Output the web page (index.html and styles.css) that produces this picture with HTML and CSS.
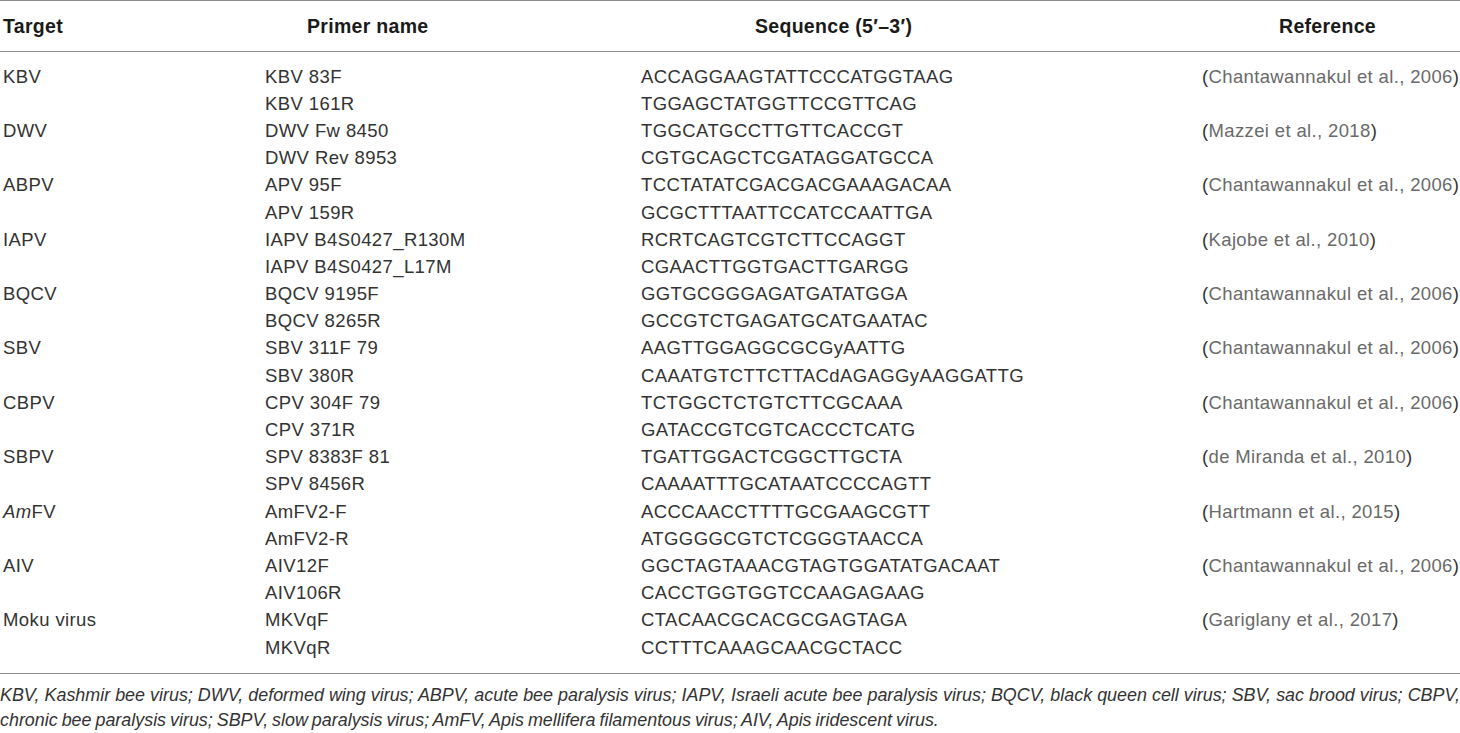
FILE: index.html
```html
<!DOCTYPE html>
<html lang="en">
<head>
<meta charset="utf-8">
<title>Primers</title>
<link rel="stylesheet" href="styles.css">
</head>
<body>
<div class="table">
  <div class="head">
    <div class="h h1">Target</div>
    <div class="h h2">Primer name</div>
    <div class="h h3">Sequence (5′–3′)</div>
    <div class="h h4">Reference</div>
  </div>
  <div class="body">
    <div class="row"><div class="c1">KBV</div><div>KBV 83F</div><div>ACCAGGAAGTATTCCCATGGTAAG</div><div class="ref">(<span>Chantawannakul et al., 2006</span>)</div></div>
    <div class="row"><div class="c1"></div><div>KBV 161R</div><div>TGGAGCTATGGTTCCGTTCAG</div><div></div></div>
    <div class="row"><div class="c1">DWV</div><div>DWV Fw 8450</div><div>TGGCATGCCTTGTTCACCGT</div><div class="ref">(<span>Mazzei et al., 2018</span>)</div></div>
    <div class="row"><div class="c1"></div><div>DWV Rev 8953</div><div>CGTGCAGCTCGATAGGATGCCA</div><div></div></div>
    <div class="row"><div class="c1">ABPV</div><div>APV 95F</div><div>TCCTATATCGACGACGAAAGACAA</div><div class="ref">(<span>Chantawannakul et al., 2006</span>)</div></div>
    <div class="row"><div class="c1"></div><div>APV 159R</div><div>GCGCTTTAATTCCATCCAATTGA</div><div></div></div>
    <div class="row"><div class="c1">IAPV</div><div>IAPV B4S0427_R130M</div><div>RCRTCAGTCGTCTTCCAGGT</div><div class="ref">(<span>Kajobe et al., 2010</span>)</div></div>
    <div class="row"><div class="c1"></div><div>IAPV B4S0427_L17M</div><div>CGAACTTGGTGACTTGARGG</div><div></div></div>
    <div class="row"><div class="c1">BQCV</div><div>BQCV 9195F</div><div>GGTGCGGGAGATGATATGGA</div><div class="ref">(<span>Chantawannakul et al., 2006</span>)</div></div>
    <div class="row"><div class="c1"></div><div>BQCV 8265R</div><div>GCCGTCTGAGATGCATGAATAC</div><div></div></div>
    <div class="row"><div class="c1">SBV</div><div>SBV 311F 79</div><div>AAGTTGGAGGCGCGyAATTG</div><div class="ref">(<span>Chantawannakul et al., 2006</span>)</div></div>
    <div class="row"><div class="c1"></div><div>SBV 380R</div><div>CAAATGTCTTCTTACdAGAGGyAAGGATTG</div><div></div></div>
    <div class="row"><div class="c1">CBPV</div><div>CPV 304F 79</div><div>TCTGGCTCTGTCTTCGCAAA</div><div class="ref">(<span>Chantawannakul et al., 2006</span>)</div></div>
    <div class="row"><div class="c1"></div><div>CPV 371R</div><div>GATACCGTCGTCACCCTCATG</div><div></div></div>
    <div class="row"><div class="c1">SBPV</div><div>SPV 8383F 81</div><div>TGATTGGACTCGGCTTGCTA</div><div class="ref">(<span>de Miranda et al., 2010</span>)</div></div>
    <div class="row"><div class="c1"></div><div>SPV 8456R</div><div>CAAAATTTGCATAATCCCCAGTT</div><div></div></div>
    <div class="row"><div class="c1"><i>Am</i>FV</div><div>AmFV2-F</div><div>ACCCAACCTTTTGCGAAGCGTT</div><div class="ref">(<span>Hartmann et al., 2015</span>)</div></div>
    <div class="row"><div class="c1"></div><div>AmFV2-R</div><div>ATGGGGCGTCTCGGGTAACCA</div><div></div></div>
    <div class="row"><div class="c1">AIV</div><div>AIV12F</div><div>GGCTAGTAAACGTAGTGGATATGACAAT</div><div class="ref">(<span>Chantawannakul et al., 2006</span>)</div></div>
    <div class="row"><div class="c1"></div><div>AIV106R</div><div>CACCTGGTGGTCCAAGAGAAG</div><div></div></div>
    <div class="row"><div class="c1">Moku virus</div><div>MKVqF</div><div>CTACAACGCACGCGAGTAGA</div><div class="ref">(<span>Gariglany et al., 2017</span>)</div></div>
    <div class="row"><div class="c1"></div><div>MKVqR</div><div>CCTTTCAAAGCAACGCTACC</div><div></div></div>
  </div>
</div>
<p class="note">KBV, Kashmir bee virus; DWV, deformed wing virus; ABPV, acute bee paralysis virus; IAPV, Israeli acute bee paralysis virus; BQCV, black queen cell virus; SBV, sac brood virus; CBPV, chronic bee paralysis virus; SBPV, slow paralysis virus; AmFV, Apis mellifera filamentous virus; AIV, Apis iridescent virus.</p>
</body>
</html>
```
FILE: styles.css
```css
html, body {
  margin: 0;
  padding: 0;
  background: #fff;
}
body {
  font-family: "Liberation Sans", Arial, sans-serif;
  color: #333;
  width: 1460px;
}
.table {
  border-top: 1px solid #8c8c8c;
  border-bottom: 1px solid #8c8c8c;
}
.head {
  display: grid;
  grid-template-columns: 265px 376px 561px 1fr;
  height: 50px;
  align-items: center;
  border-bottom: 1px solid #8c8c8c;
  font-weight: bold;
  font-size: 19.5px;
  letter-spacing: 0.3px;
  color: #1a1a1a;
}
.h1 { padding-left: 3px; }
.h2 { padding-left: 42px; }
.h3 { padding-left: 114px; }
.h4 { padding-left: 77px; }
.body {
  padding: 11px 0 12px;
}
.row {
  display: grid;
  grid-template-columns: 265px 376px 561px 1fr;
  height: 27.2px;
  align-items: center;
  font-size: 18.5px;
  letter-spacing: 0.4px;
  white-space: nowrap;
}
.c1 { padding-left: 3px; }
.ref { color: #333; letter-spacing: 0.36px; }
.ref span { color: #6a6a6a; }
.note {
  margin: 9px 0 0;
  font-style: italic;
  font-size: 17.9px;
  word-spacing: -1px;
  line-height: 25px;
  text-align: justify;
  color: #333;
}
```
